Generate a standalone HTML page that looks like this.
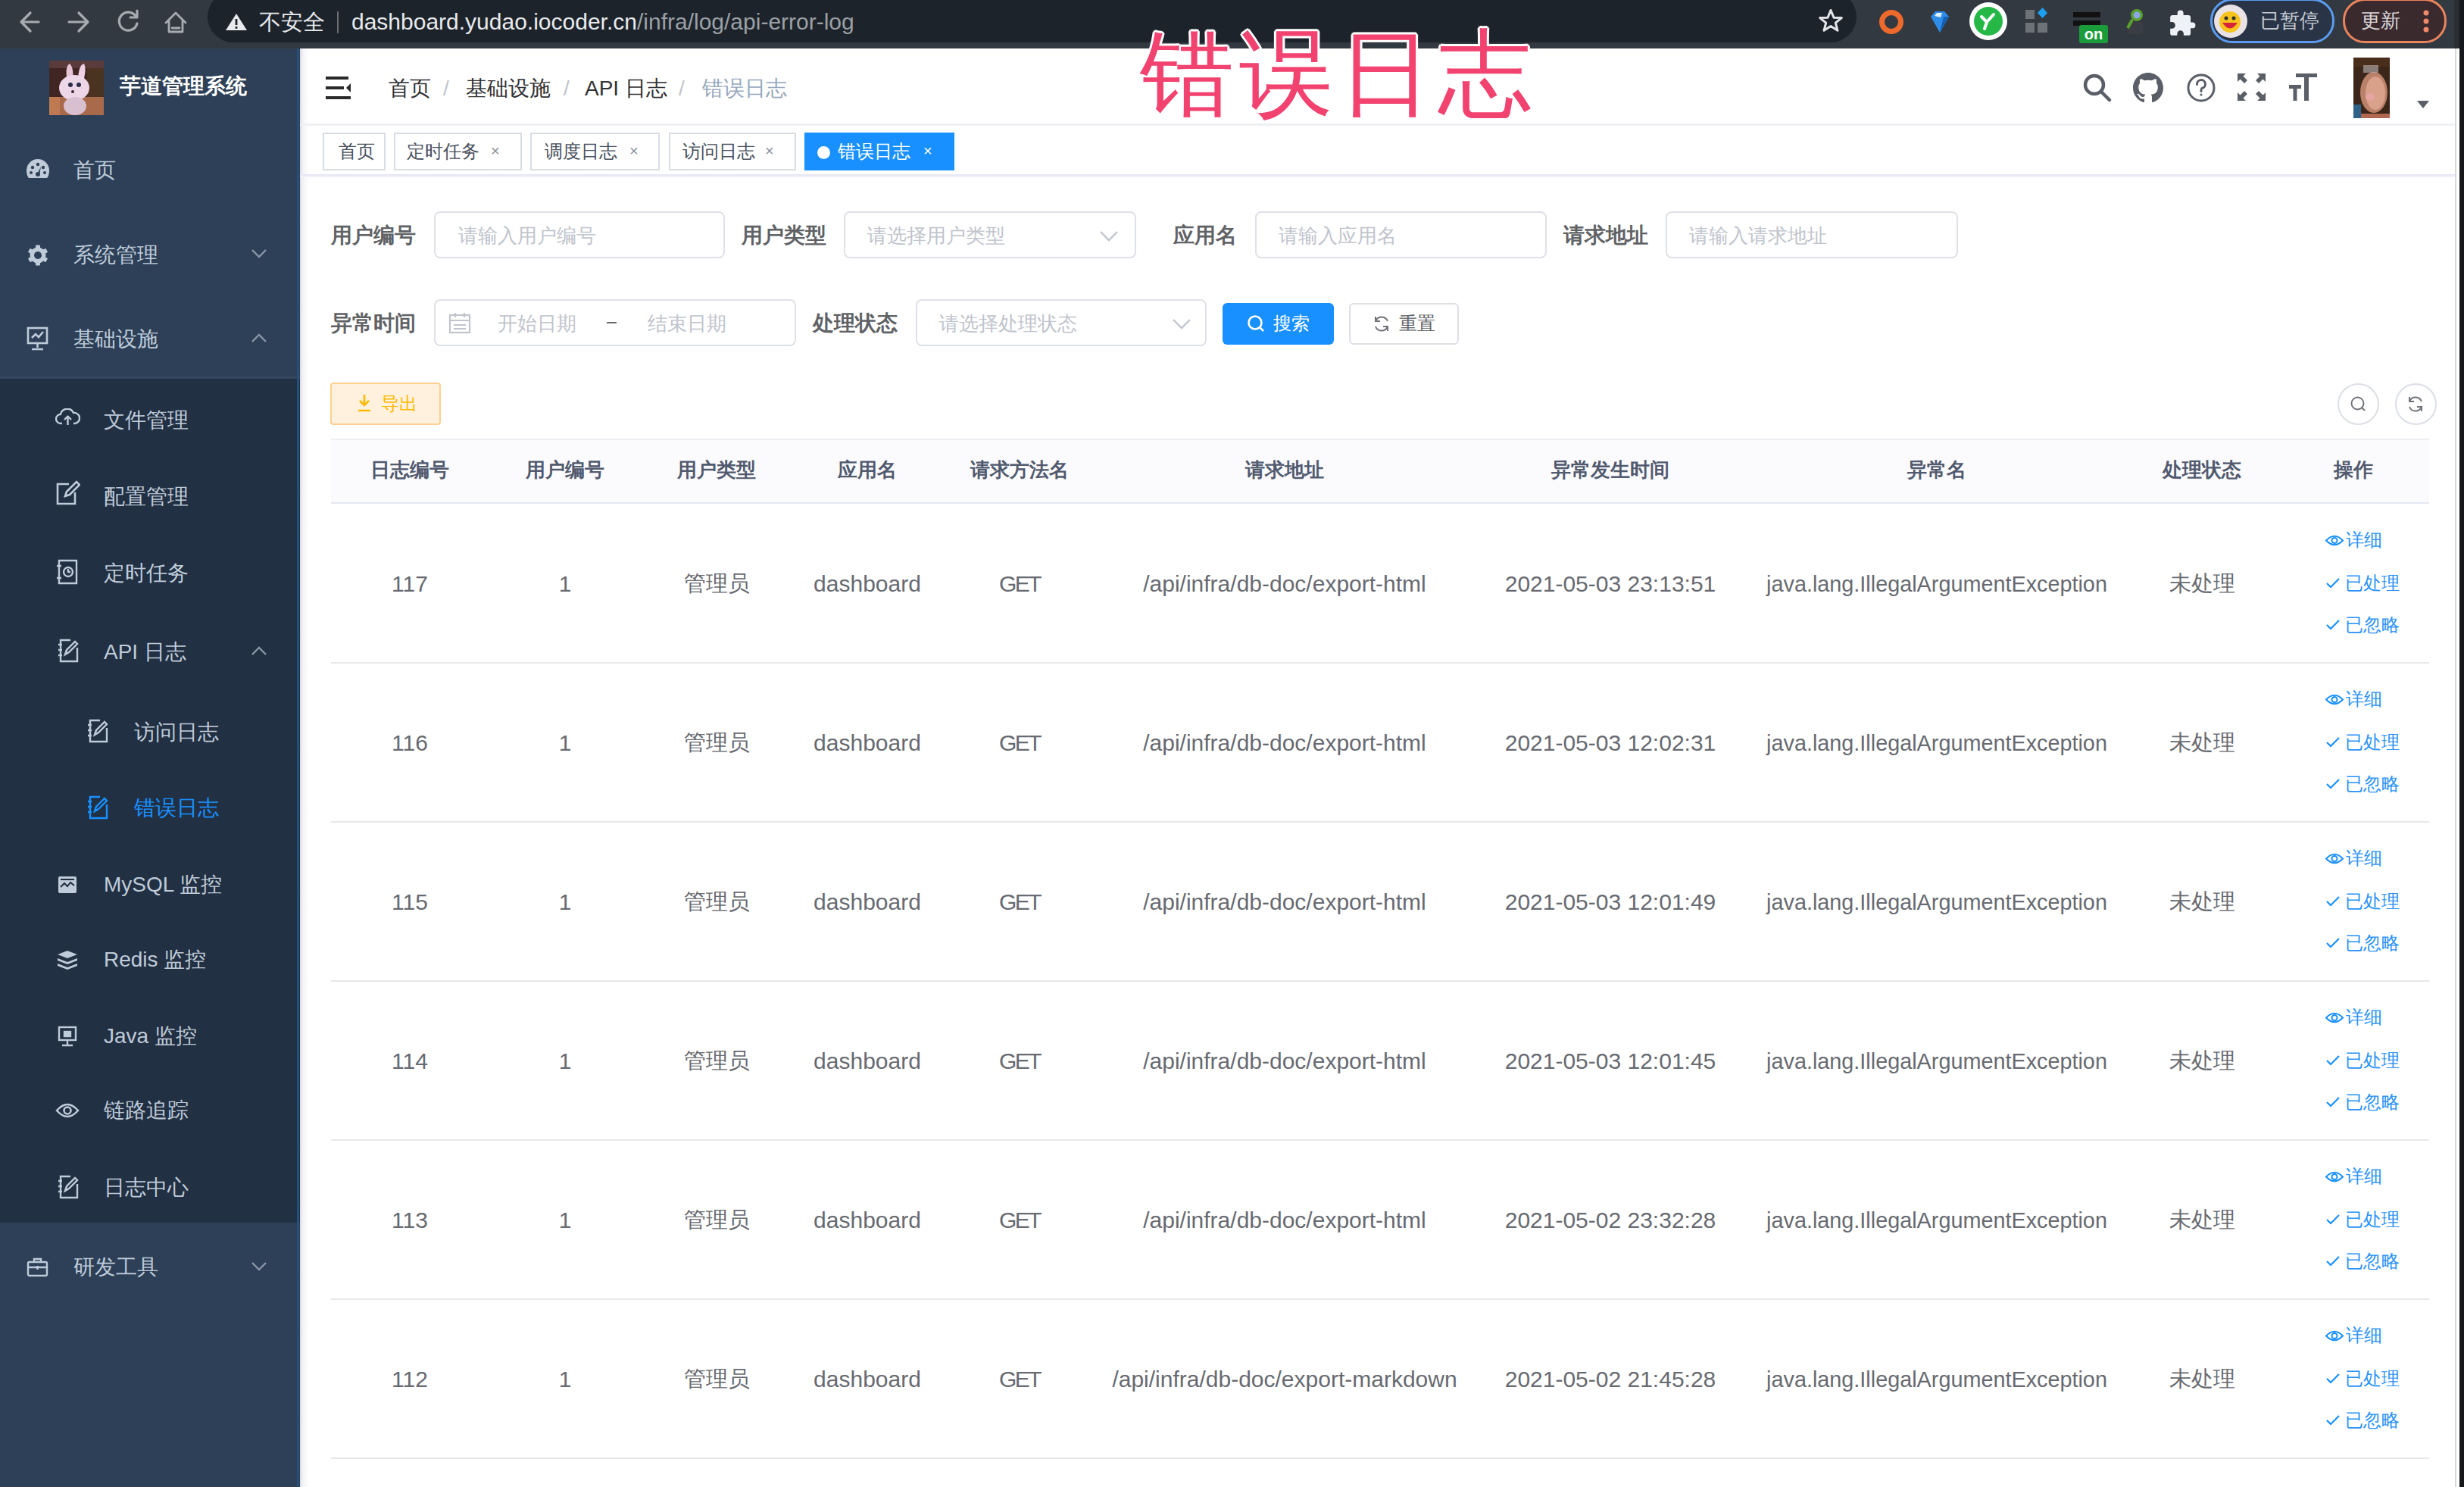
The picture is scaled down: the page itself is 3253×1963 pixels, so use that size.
<!DOCTYPE html>
<html><head><meta charset="utf-8">
<style>
*{box-sizing:border-box;margin:0;padding:0}
html,body{width:3253px;height:1963px;overflow:hidden;background:#fff;font-family:"Liberation Sans",sans-serif}
.a{position:absolute}
.t{position:absolute;white-space:nowrap;line-height:1}
svg{display:block}
/* chrome */
#chrome{left:0;top:0;width:3253px;height:64px;background:#333941}
#url{left:274px;top:-12px;width:2177px;height:68px;border-radius:34px;background:#1d232a}
/* sidebar */
#side{left:0;top:64px;width:396px;height:1899px;background:#2d4058}
#sub{left:0;top:500px;width:396px;height:1114px;background:#223043}
.mi{color:#bfcbd9;font-size:28px}
/* main */
.crumb{font-size:28px;color:#303133}
.sep{font-size:28px;color:#c0c4cc}
.tag{position:absolute;top:175px;height:50px;border:2px solid #d8dce5;background:#fff;color:#495060;font-size:24px}
.lbl{font-size:28px;font-weight:bold;color:#606266}
.inp{position:absolute;height:62px;border:2px solid #dfe1e8;border-radius:8px;background:#fff}
.ph{font-size:26px;color:#c0c4cc}
.th{font-size:26px;font-weight:bold;color:#515a6e}
.td{font-size:29px;color:#676a71}
.tl{font-size:30px;color:#676a71}
.lk{font-size:24px;color:#2a93fa}
.rowline{position:absolute;left:437px;width:2770px;height:2px;background:#e7e8ec}
</style></head><body>

<!-- ============ CHROME BAR ============ -->
<div id="chrome" class="a">
  <div id="url" class="a"></div>
  <svg class="a" style="left:0;top:0" width="300" height="64" viewBox="0 0 300 64" fill="none" stroke="#a6abb1" stroke-width="3.2" stroke-linecap="round" stroke-linejoin="round">
    <path d="M51 29H29M40 17L28 29L40 41"/>
    <path d="M91 29H115M104 17L116 29L104 41"/>
    <path d="M179 21A12 12 0 1 0 181 31"/><path d="M181 14V23H172" />
    <path d="M219 30L232 17L245 30M223 26V42H241V26M227 37H237" stroke-width="2.8"/>
  </svg>
  <svg class="a" style="left:296px;top:16px" width="32" height="26" viewBox="0 0 32 26"><path d="M16 2L30 24H2Z" fill="#e8eaed"/><rect x="14.6" y="9" width="2.8" height="8" fill="#1f2125"/><rect x="14.6" y="19" width="2.8" height="2.8" fill="#1f2125"/></svg>
  <div class="t" style="left:342px;top:15px;font-size:29px;color:#e8eaed">不安全</div>
  <div class="a" style="left:445px;top:15px;width:2px;height:29px;background:#6b6f75"></div>
  <div class="t" style="left:464px;top:14px;font-size:30px;color:#e8eaed">dashboard.yudao.iocoder.cn<span style="color:#9aa0a6">/infra/log/api-error-log</span></div>
  <svg class="a" style="left:2400px;top:11px" width="34" height="32" viewBox="0 0 34 32" fill="none" stroke="#e3e5e8" stroke-width="3" stroke-linejoin="round"><path d="M17 2.5L21 12.2L31.3 12.6L23.3 19.2L26 29.3L17 23.6L8 29.3L10.7 19.2L2.7 12.6L13 12.2Z"/></svg>
  <!-- extensions -->
  <svg class="a" style="left:2478px;top:10px" width="38" height="38" viewBox="0 0 38 38"><circle cx="19" cy="19" r="12.5" fill="none" stroke="#ee6a2c" stroke-width="7"/></svg>
  <svg class="a" style="left:2545px;top:12px" width="32" height="34" viewBox="0 0 32 34"><path d="M4 10L10 3H22L28 10L16 31Z" fill="#2e8be8"/><path d="M9 9L12 5H19L17 11Z" fill="#dff1ff"/><path d="M16 31L28 10H21Z" fill="#1360b5"/></svg>
  <svg class="a" style="left:2598px;top:1px" width="54" height="54" viewBox="0 0 54 54"><circle cx="27" cy="27" r="25" fill="#fff"/><circle cx="27" cy="27" r="19" fill="#25b847"/><path d="M18 21L25 28L34 18M25 28L22 37" fill="none" stroke="#fff" stroke-width="4" stroke-linecap="round"/></svg>
  <svg class="a" style="left:2672px;top:9px" width="34" height="36" viewBox="0 0 34 36"><rect x="2" y="4" width="12" height="12" fill="#6d7178"/><rect x="2" y="21" width="12" height="13" fill="#6d7178"/><rect x="18" y="21" width="13" height="13" fill="#6d7178"/><path d="M24.5 1L31 8L24.5 15L18 8Z" fill="#1ea0f0"/></svg>
  <svg class="a" style="left:2735px;top:14px" width="50" height="46" viewBox="0 0 50 46"><rect x="2" y="2" width="36" height="7" fill="#111"/><rect x="2" y="13" width="36" height="7" fill="#111"/><rect x="10" y="19" width="38" height="24" rx="3" fill="#1a9c3a"/><text x="29" y="38" font-family="Liberation Sans" font-weight="bold" font-size="20" fill="#fff" text-anchor="middle">on</text></svg>
  <svg class="a" style="left:2804px;top:9px" width="30" height="38" viewBox="0 0 30 38"><rect x="5" y="20" width="20" height="16" rx="2" fill="#3a3d42"/><circle cx="17" cy="11" r="8" fill="#5aa02c"/><circle cx="17" cy="11" r="4.5" fill="#8da6e8"/><path d="M11 17L5 28" stroke="#5aa02c" stroke-width="4"/></svg>
  <svg class="a" style="left:2862px;top:12px" width="38" height="38" viewBox="0 0 24 24"><path fill="#eef1f5" d="M20.5 11H19V7a2 2 0 0 0-2-2h-4V3.5a2.5 2.5 0 0 0-5 0V5H4a2 2 0 0 0-2 2v3.8h1.5a2.7 2.7 0 0 1 0 5.4H2V20a2 2 0 0 0 2 2h3.8v-1.5a2.7 2.7 0 0 1 5.4 0V22H17a2 2 0 0 0 2-2v-4h1.5a2.5 2.5 0 0 0 0-5z"/></svg>
  <!-- profile pill -->
  <div class="a" style="left:2918px;top:-2px;width:164px;height:59px;border-radius:29px;border:3px solid #5b9cf0;background:#293447"></div>
  <svg class="a" style="left:2922px;top:5px" width="46" height="46" viewBox="0 0 46 46"><circle cx="23" cy="23" r="22" fill="#e9e3e6"/><circle cx="22" cy="24" r="14" fill="#f7c31d"/><path d="M12 25Q22 40 32 25Z" fill="#d8243a"/><circle cx="17" cy="19" r="2.5" fill="#333"/><circle cx="27" cy="19" r="2.5" fill="#333"/></svg>
  <div class="t" style="left:2984px;top:14px;font-size:26px;color:#c5cad3">已暂停</div>
  <!-- update pill -->
  <div class="a" style="left:3093px;top:-2px;width:137px;height:59px;border-radius:29px;border:3px solid #e9845c;background:#3a2a2e"></div>
  <div class="t" style="left:3117px;top:14px;font-size:26px;color:#d9d4d6">更新</div>
  <svg class="a" style="left:3196px;top:12px" width="14" height="32" viewBox="0 0 14 32"><circle cx="7" cy="5" r="3.5" fill="#f08a6a"/><circle cx="7" cy="16" r="3.5" fill="#f08a6a"/><circle cx="7" cy="27" r="3.5" fill="#f08a6a"/></svg>
</div>
<!-- right window edge -->
<div class="a" style="left:3241px;top:64px;width:2px;height:1899px;background:#d6d8dc"></div>
<div class="a" style="left:3247px;top:0;width:6px;height:1963px;background:#16181b"></div>
<div class="a" style="left:3240px;top:0;width:7px;height:64px;background:#2a2d32"></div>

<!-- ============ SIDEBAR ============ -->
<div id="side" class="a"></div>
<div id="sub" class="a" style="top:500px"></div>
<div class="a" style="left:0;top:497px;width:396px;height:3px;background:#34475e"></div>
<div class="a" style="left:392px;top:64px;width:3px;height:1899px;background:#25507e"></div><div class="a" style="left:396px;top:64px;width:12px;height:1899px;background:linear-gradient(90deg,#d9dae0,#f3f3f7 30%,rgba(255,255,255,0))"></div>
<!-- logo -->
<svg class="a" style="left:65px;top:80px" width="72" height="72" viewBox="0 0 72 72">
  <rect width="72" height="72" fill="#3f2622"/>
  <rect x="0" y="0" width="72" height="10" fill="#5a3a3a"/>
  <rect x="50" y="10" width="22" height="40" fill="#4a3320"/>
  <rect y="48" width="72" height="24" fill="#a86a4a"/>
  <rect x="0" y="48" width="14" height="24" fill="#c07a52"/>
  <path d="M24 28Q20 8 27 4Q33 10 31 28Z" fill="#e8c3d6"/>
  <path d="M38 28Q38 6 46 4Q50 12 44 30Z" fill="#efd0e2"/>
  <ellipse cx="33" cy="36" rx="20" ry="17" fill="#ecd6e8"/>
  <ellipse cx="34" cy="60" rx="15" ry="12" fill="#d9c0d0"/>
  <circle cx="28" cy="32" r="3" fill="#2a2f45"/><circle cx="39" cy="32" r="3" fill="#2a2f45"/>
  <circle cx="31" cy="41" r="2" fill="#3a2530"/>
</svg>
<div class="t" style="left:158px;top:100px;font-size:28px;font-weight:bold;color:#fff">芋道管理系统</div>

<!-- menu icons (top level) -->
<svg class="a" style="left:34px;top:208px" width="32" height="30" viewBox="0 0 32 30"><path d="M16 2A15 15 0 0 0 1 17C1 21 2 25 4 27H28C30 25 31 21 31 17A15 15 0 0 0 16 2Z" fill="#bfcbd9"/><circle cx="9" cy="13" r="2.2" fill="#304156"/><circle cx="16" cy="9" r="2.2" fill="#304156"/><circle cx="23" cy="13" r="2.2" fill="#304156"/><circle cx="7" cy="20" r="2" fill="#304156"/><circle cx="25" cy="20" r="2" fill="#304156"/><path d="M15 22L20 12L18 23Z" fill="#304156"/><circle cx="16" cy="22" r="3" fill="#304156"/></svg>
<div class="t mi" style="left:97px;top:211px">首页</div>

<svg class="a" style="left:35px;top:322px" width="30" height="30" viewBox="0 0 30 30"><rect x="12" y="1.5" width="6" height="7" rx="1" fill="#bfcbd9" transform="rotate(0 15 15)"/><rect x="12" y="1.5" width="6" height="7" rx="1" fill="#bfcbd9" transform="rotate(60 15 15)"/><rect x="12" y="1.5" width="6" height="7" rx="1" fill="#bfcbd9" transform="rotate(120 15 15)"/><rect x="12" y="1.5" width="6" height="7" rx="1" fill="#bfcbd9" transform="rotate(180 15 15)"/><rect x="12" y="1.5" width="6" height="7" rx="1" fill="#bfcbd9" transform="rotate(240 15 15)"/><rect x="12" y="1.5" width="6" height="7" rx="1" fill="#bfcbd9" transform="rotate(300 15 15)"/><circle cx="15" cy="15" r="10.5" fill="#bfcbd9"/><circle cx="15" cy="15" r="5" fill="#2d4058"/></svg>
<div class="t mi" style="left:97px;top:323px">系统管理</div>
<svg class="a" style="left:331px;top:328px" width="22" height="13" viewBox="0 0 22 13"><path d="M2 2L11 11L20 2" fill="none" stroke="#8a96a6" stroke-width="2.4"/></svg>

<svg class="a" style="left:35px;top:431px" width="29" height="33" viewBox="0 0 29 33" fill="none" stroke="#bfcbd9" stroke-width="2.6"><rect x="2" y="2" width="25" height="20"/><path d="M7 15L12 10L16 14L22 7"/><path d="M14.5 22V28M7 30H22"/></svg>
<div class="t mi" style="left:97px;top:434px">基础设施</div>
<svg class="a" style="left:331px;top:440px" width="22" height="13" viewBox="0 0 22 13"><path d="M2 11L11 2L20 11" fill="none" stroke="#8a96a6" stroke-width="2.4"/></svg>

<!-- submenu -->
<svg class="a" style="left:73px;top:539px" width="33" height="24" viewBox="0 0 33 24" fill="none" stroke="#bfcbd9" stroke-width="2.4" stroke-linejoin="round"><path d="M9 20H7A6 6 0 0 1 7 8A9 9 0 0 1 24 6A7 7 0 0 1 26 20H24"/><path d="M16.5 22V11M12 15L16.5 10.5L21 15"/></svg>
<div class="t mi" style="left:137px;top:541px">文件管理</div>

<svg class="a" style="left:73px;top:633px" width="33" height="35" viewBox="0 0 33 35" fill="none" stroke="#bfcbd9" stroke-width="2.6"><path d="M18 6H3V32H26V17"/><path d="M13 22L15 16L28 3L32 7L19 20Z"/></svg>
<div class="t mi" style="left:137px;top:642px">配置管理</div>

<svg class="a" style="left:75px;top:738px" width="29" height="34" viewBox="0 0 29 34" fill="none" stroke="#bfcbd9" stroke-width="2.4"><path d="M3 2H26V32H3Z"/><path d="M0 9H6M0 25H6"/><circle cx="15" cy="17" r="6"/><path d="M15 13V17H18"/></svg>
<div class="t mi" style="left:137px;top:743px">定时任务</div>

<svg class="a" style="left:77px;top:843px" width="27" height="32" viewBox="0 0 27 32" fill="none" stroke="#bfcbd9" stroke-width="2.4"><path d="M16 2H3V30H25V12"/><path d="M0 8H5M0 15H5M0 22H5"/><path d="M9 21L11 15L22 4L25 7L14 18Z"/></svg>
<div class="t mi" style="left:137px;top:847px">API 日志</div>
<svg class="a" style="left:331px;top:853px" width="22" height="13" viewBox="0 0 22 13"><path d="M2 11L11 2L20 11" fill="none" stroke="#8a96a6" stroke-width="2.4"/></svg>

<svg class="a" style="left:116px;top:949px" width="27" height="32" viewBox="0 0 27 32" fill="none" stroke="#bfcbd9" stroke-width="2.4"><path d="M16 2H3V30H25V12"/><path d="M0 8H5M0 15H5M0 22H5"/><path d="M9 21L11 15L22 4L25 7L14 18Z"/></svg>
<div class="t mi" style="left:177px;top:953px">访问日志</div>

<svg class="a" style="left:116px;top:1050px" width="27" height="32" viewBox="0 0 27 32" fill="none" stroke="#1890ff" stroke-width="2.4"><path d="M16 2H3V30H25V12"/><path d="M0 8H5M0 15H5M0 22H5"/><path d="M9 21L11 15L22 4L25 7L14 18Z"/></svg>
<div class="t mi" style="left:177px;top:1053px;color:#1890ff">错误日志</div>

<svg class="a" style="left:76px;top:1156px" width="26" height="24" viewBox="0 0 26 24"><rect x="1" y="1" width="24" height="22" rx="2" fill="#bfcbd9"/><path d="M4 15L9 10L13 14L17 9L22 13" fill="none" stroke="#1f2d3d" stroke-width="2"/><rect x="4" y="4" width="18" height="2" fill="#1f2d3d"/></svg>
<div class="t mi" style="left:137px;top:1154px">MySQL 监控</div>

<svg class="a" style="left:74px;top:1253px" width="30" height="28" viewBox="0 0 30 28"><path d="M15 2L28 7L15 12L2 7Z" fill="#bfcbd9"/><path d="M2 12L15 17L28 12V15L15 20L2 15Z" fill="#bfcbd9"/><path d="M2 19L15 24L28 19V22L15 27L2 22Z" fill="#bfcbd9"/></svg>
<div class="t mi" style="left:137px;top:1253px">Redis 监控</div>

<svg class="a" style="left:76px;top:1354px" width="26" height="28" viewBox="0 0 26 28" fill="none" stroke="#bfcbd9" stroke-width="2.4"><rect x="2" y="2" width="22" height="17"/><path d="M13 19V25M6 26H20"/><rect x="9" y="8" width="8" height="6" fill="#bfcbd9"/></svg>
<div class="t mi" style="left:137px;top:1354px">Java 监控</div>

<svg class="a" style="left:73px;top:1454px" width="32" height="24" viewBox="0 0 32 24" fill="none" stroke="#bfcbd9" stroke-width="2.6"><path d="M2 12Q16 -4 30 12Q16 28 2 12Z"/><circle cx="16" cy="12" r="4.5"/></svg>
<div class="t mi" style="left:137px;top:1452px">链路追踪</div>

<svg class="a" style="left:77px;top:1551px" width="27" height="32" viewBox="0 0 27 32" fill="none" stroke="#bfcbd9" stroke-width="2.4"><path d="M16 2H3V30H25V12"/><path d="M0 8H5M0 15H5M0 22H5"/><path d="M9 21L11 15L22 4L25 7L14 18Z"/></svg>
<div class="t mi" style="left:137px;top:1554px">日志中心</div>

<svg class="a" style="left:35px;top:1659px" width="29" height="27" viewBox="0 0 29 27" fill="none" stroke="#bfcbd9" stroke-width="2.4"><rect x="2" y="7" width="25" height="18" rx="2"/><path d="M10 7V3H19V7M2 14H27M14.5 12V17"/></svg>
<div class="t mi" style="left:97px;top:1659px">研发工具</div>
<svg class="a" style="left:331px;top:1665px" width="22" height="13" viewBox="0 0 22 13"><path d="M2 2L11 11L20 2" fill="none" stroke="#8a96a6" stroke-width="2.4"/></svg>

<!-- ============ MAIN ============ -->
<!-- navbar -->
<div class="a" style="left:396px;top:163px;width:2845px;height:3px;background:#eef0f3"></div>
<svg class="a" style="left:428px;top:99px" width="38" height="34" viewBox="0 0 38 34"><rect x="2" y="2" width="30" height="4" fill="#2a2a2a"/><rect x="2" y="15" width="24" height="4" fill="#2a2a2a"/><rect x="2" y="28" width="33" height="4" fill="#2a2a2a"/><path d="M35 11L29 17L35 23Z" fill="#2a2a2a"/></svg>
<div class="t crumb" style="left:513px;top:103px">首页</div>
<div class="t sep" style="left:585px;top:103px">/</div>
<div class="t crumb" style="left:615px;top:103px">基础设施</div>
<div class="t sep" style="left:744px;top:103px">/</div>
<div class="t crumb" style="left:772px;top:103px">API 日志</div>
<div class="t sep" style="left:896px;top:103px">/</div>
<div class="t crumb" style="left:927px;top:103px;color:#97a8be">错误日志</div>

<!-- right icons -->
<svg class="a" style="left:2749px;top:96px" width="40" height="40" viewBox="0 0 40 40" fill="none" stroke="#5a5e66" stroke-width="4.5" stroke-linecap="round"><circle cx="16" cy="16" r="12"/><path d="M25 25L36 36"/></svg>
<svg class="a" style="left:2816px;top:96px" width="40" height="40" viewBox="0 0 16 16"><path fill="#5a5e66" d="M8 0C3.58 0 0 3.58 0 8c0 3.54 2.29 6.53 5.47 7.59.4.07.55-.17.55-.38 0-.19-.01-.82-.01-1.49-2.01.37-2.53-.49-2.69-.94-.09-.23-.48-.94-.82-1.13-.28-.15-.68-.52-.01-.53.63-.01 1.08.58 1.23.82.72 1.21 1.87.87 2.33.66.07-.52.28-.87.51-1.07-1.78-.2-3.64-.89-3.64-3.95 0-.87.31-1.59.82-2.15-.08-.2-.36-1.02.08-2.12 0 0 .67-.21 2.2.82.64-.18 1.32-.27 2-.27.68 0 1.36.09 2 .27 1.53-1.04 2.2-.82 2.2-.82.44 1.1.16 1.92.08 2.12.51.56.82 1.27.82 2.15 0 3.07-1.87 3.75-3.65 3.95.29.25.54.73.54 1.48 0 1.07-.01 1.93-.01 2.2 0 .21.15.46.55.38A8.013 8.013 0 0016 8c0-4.42-3.58-8-8-8z"/></svg>
<svg class="a" style="left:2886px;top:96px" width="40" height="40" viewBox="0 0 40 40" fill="none" stroke="#5a5e66" stroke-width="3"><circle cx="20" cy="20" r="17"/><path d="M14.5 15.5A5.5 5.5 0 1 1 21 20.5C20 21 20 22 20 24.5" stroke-linecap="round"/><circle cx="20" cy="29" r="1.6" fill="#5a5e66" stroke="none"/></svg>
<svg class="a" style="left:2952px;top:95px" width="41" height="40" viewBox="0 0 41 40" fill="#5a5e66"><path d="M2 2H13L9.5 5.5L15 11L11 15L5.5 9.5L2 13Z"/><path d="M39 2H28L31.5 5.5L26 11L30 15L35.5 9.5L39 13Z"/><path d="M2 38H13L9.5 34.5L15 29L11 25L5.5 30.5L2 27Z"/><path d="M39 38H28L31.5 34.5L26 29L30 25L35.5 30.5L39 27Z"/></svg>
<svg class="a" style="left:3021px;top:95px" width="40" height="40" viewBox="0 0 40 40" fill="#5a5e66"><rect x="10" y="2" width="28" height="5"/><rect x="21" y="2" width="6" height="36"/><rect x="1" y="17" width="16" height="5"/><rect x="6.5" y="17" width="5" height="21"/></svg>
<svg class="a" style="left:3107px;top:76px" width="48" height="80" viewBox="0 0 48 80">
  <rect width="48" height="80" fill="#3b2619"/>
  <rect x="0" y="0" width="48" height="12" fill="#4a2e1c"/>
  <ellipse cx="27" cy="46" rx="18" ry="27" fill="#b9806a"/>
  <ellipse cx="29" cy="47" rx="13" ry="22" fill="#d9a08a"/>
  <ellipse cx="22" cy="52" rx="6" ry="5" fill="#e7a4a0"/>
  <rect x="13" y="10" width="20" height="10" fill="#c9c4c4" opacity=".55"/>
  <rect x="0" y="62" width="10" height="18" fill="#2f6288"/>
  <rect x="10" y="74" width="38" height="6" fill="#b06850"/>
</svg>
<svg class="a" style="left:3190px;top:132px" width="18" height="12" viewBox="0 0 18 12"><path d="M1 1H17L9 11Z" fill="#5a5e66"/></svg>

<!-- tags view -->
<div class="a" style="left:396px;top:230px;width:2845px;height:4px;background:linear-gradient(#e3e3f3,#f5f5fb)"></div>
<div class="tag" style="left:426px;width:83px"></div><div class="t" style="left:447px;top:188px;font-size:24px;color:#495060">首页</div>
<div class="tag" style="left:520px;width:169px"></div><div class="t" style="left:537px;top:188px;font-size:24px;color:#495060">定时任务</div><div class="t" style="left:648px;top:189px;font-size:20px;color:#8a909c">×</div>
<div class="tag" style="left:700px;width:171px"></div><div class="t" style="left:719px;top:188px;font-size:24px;color:#495060">调度日志</div><div class="t" style="left:831px;top:189px;font-size:20px;color:#8a909c">×</div>
<div class="tag" style="left:883px;width:168px"></div><div class="t" style="left:901px;top:188px;font-size:24px;color:#495060">访问日志</div><div class="t" style="left:1010px;top:189px;font-size:20px;color:#8a909c">×</div>
<div class="a" style="left:1062px;top:175px;width:198px;height:50px;background:#1890ff"></div>
<div class="a" style="left:1079px;top:193px;width:17px;height:17px;border-radius:50%;background:#fff"></div>
<div class="t" style="left:1106px;top:188px;font-size:24px;color:#fff">错误日志</div><div class="t" style="left:1219px;top:189px;font-size:20px;color:#fff">×</div>

<!-- ===== search form ===== -->
<div class="t lbl" style="left:437px;top:297px">用户编号</div>
<div class="inp" style="left:573px;top:279px;width:384px"></div>
<div class="t ph" style="left:605px;top:298px">请输入用户编号</div>

<div class="t lbl" style="left:979px;top:297px">用户类型</div>
<div class="inp" style="left:1114px;top:279px;width:386px"></div>
<div class="t ph" style="left:1145px;top:298px">请选择用户类型</div>
<svg class="a" style="left:1451px;top:304px" width="26" height="16" viewBox="0 0 26 16"><path d="M2 2L13 13L24 2" fill="none" stroke="#c0c4cc" stroke-width="2.4"/></svg>

<div class="t lbl" style="left:1549px;top:297px">应用名</div>
<div class="inp" style="left:1657px;top:279px;width:385px"></div>
<div class="t ph" style="left:1688px;top:298px">请输入应用名</div>

<div class="t lbl" style="left:2064px;top:297px">请求地址</div>
<div class="inp" style="left:2199px;top:279px;width:386px"></div>
<div class="t ph" style="left:2230px;top:298px">请输入请求地址</div>

<div class="t lbl" style="left:437px;top:413px">异常时间</div>
<div class="inp" style="left:573px;top:395px;width:478px"></div>
<svg class="a" style="left:592px;top:412px" width="30" height="30" viewBox="0 0 30 30" fill="none" stroke="#c0c4cc" stroke-width="2.2"><rect x="2" y="4" width="26" height="23"/><path d="M2 11H28M9 1V7M21 1V7M7 17H23M7 22H23"/></svg>
<div class="t ph" style="left:657px;top:414px">开始日期</div>
<div class="a" style="left:801px;top:425px;width:13px;height:2px;background:#6a6c72"></div>
<div class="t ph" style="left:855px;top:414px">结束日期</div>

<div class="t lbl" style="left:1073px;top:413px">处理状态</div>
<div class="inp" style="left:1209px;top:395px;width:384px"></div>
<div class="t ph" style="left:1240px;top:414px">请选择处理状态</div>
<svg class="a" style="left:1547px;top:420px" width="26" height="16" viewBox="0 0 26 16"><path d="M2 2L13 13L24 2" fill="none" stroke="#c0c4cc" stroke-width="2.4"/></svg>

<div class="a" style="left:1614px;top:400px;width:147px;height:55px;border-radius:6px;background:#1890ff"></div>
<svg class="a" style="left:1646px;top:415px" width="25" height="25" viewBox="0 0 25 25" fill="none" stroke="#fff" stroke-width="2.6"><circle cx="11" cy="11" r="8.5"/><path d="M17 17L22 22"/></svg>
<div class="t" style="left:1681px;top:415px;font-size:24px;color:#fff">搜索</div>

<div class="a" style="left:1781px;top:400px;width:145px;height:55px;border-radius:6px;border:2px solid #dcdfe6;background:#fff"></div>
<svg class="a" style="left:1813px;top:416px" width="23" height="23" viewBox="0 0 23 23" fill="none" stroke="#6f7278" stroke-width="2"><path d="M19 8A8.5 8.5 0 0 0 3.5 7M3 15A8.5 8.5 0 0 0 18.5 16"/><path d="M3 2V8H9M19 21V15H13" /></svg>
<div class="t" style="left:1847px;top:415px;font-size:24px;color:#606266">重置</div>

<!-- toolbar -->
<div class="a" style="left:436px;top:505px;width:146px;height:56px;border-radius:4px;border:2px solid #ffd08f;background:#fff1de"></div>
<svg class="a" style="left:471px;top:519px" width="20" height="26" viewBox="0 0 20 26" fill="none" stroke="#ffba00" stroke-width="2.6"><path d="M10 2V16M4 10L10 16L16 10M2 23H18"/></svg>
<div class="t" style="left:503px;top:521px;font-size:24px;color:#ffba00">导出</div>

<div class="a" style="left:3086px;top:506px;width:55px;height:55px;border-radius:50%;border:2px solid #dcdfe6;background:#fff"></div>
<svg class="a" style="left:3101px;top:521px" width="25" height="25" viewBox="0 0 25 25" fill="none" stroke="#6f7278" stroke-width="1.9"><circle cx="11.5" cy="11.5" r="8"/><path d="M17 17L21 21"/></svg>
<div class="a" style="left:3162px;top:506px;width:55px;height:55px;border-radius:50%;border:2px solid #dcdfe6;background:#fff"></div>
<svg class="a" style="left:3178px;top:522px" width="23" height="23" viewBox="0 0 23 23" fill="none" stroke="#6f7278" stroke-width="1.9"><path d="M19 8A8.5 8.5 0 0 0 3.5 7M3 15A8.5 8.5 0 0 0 18.5 16"/><path d="M3 2V8H9M19 21V15H13" /></svg>

<!-- ===== table ===== -->
<div class="a" style="left:437px;top:579px;width:2770px;height:86px;background:#fbfbfe;border-top:2px solid #eef0f4"></div>
<div class="a" style="left:437px;top:663px;width:2770px;height:2px;background:#e3e7ee"></div>
<div class="t th" style="left:437px;width:208px;text-align:center;top:607px">日志编号</div>
<div class="t th" style="left:645px;width:202px;text-align:center;top:607px">用户编号</div>
<div class="t th" style="left:847px;width:198px;text-align:center;top:607px">用户类型</div>
<div class="t th" style="left:1045px;width:200px;text-align:center;top:607px">应用名</div>
<div class="t th" style="left:1245px;width:202px;text-align:center;top:607px">请求方法名</div>
<div class="t th" style="left:1447px;width:498px;text-align:center;top:607px">请求地址</div>
<div class="t th" style="left:1945px;width:362px;text-align:center;top:607px">异常发生时间</div>
<div class="t th" style="left:2307px;width:500px;text-align:center;top:607px">异常名</div>
<div class="t th" style="left:2807px;width:200px;text-align:center;top:607px">处理状态</div>
<div class="t th" style="left:3007px;width:200px;text-align:center;top:607px">操作</div>
<div class="rowline" style="top:874px"></div>
<div class="t tl" style="left:437px;width:208px;text-align:center;top:756px">117</div>
<div class="t tl" style="left:645px;width:202px;text-align:center;top:756px">1</div>
<div class="t td" style="left:847px;width:198px;text-align:center;top:756px">管理员</div>
<div class="t tl" style="left:1045px;width:200px;text-align:center;top:756px">dashboard</div>
<div class="t tl" style="left:1245px;width:202px;text-align:center;top:756px"><span style="letter-spacing:-2.5px">GET</span></div>
<div class="t tl" style="left:1447px;width:498px;text-align:center;top:756px">/api/infra/db-doc/export-html</div>
<div class="t tl" style="left:1945px;width:362px;text-align:center;top:756px">2021-05-03 23:13:51</div>
<div class="t tl" style="left:2307px;width:500px;text-align:center;top:756px"><span style="font-size:28.8px">java.lang.IllegalArgumentException</span></div>
<div class="t td" style="left:2807px;width:200px;text-align:center;top:756px">未处理</div>
<svg class="a" style="left:3069px;top:705px" width="26" height="17" viewBox="0 0 26 17" fill="none" stroke="#1890ff" stroke-width="2"><path d="M2 8.5Q13 -3 24 8.5Q13 20 2 8.5Z"/><circle cx="13" cy="8.5" r="3.5"/></svg>
<div class="t lk" style="left:3097px;top:701px">详细</div>
<svg class="a" style="left:3070px;top:762px" width="20" height="16" viewBox="0 0 20 16" fill="none" stroke="#1890ff" stroke-width="2.2"><path d="M2 8L7 13L18 2"/></svg>
<div class="t lk" style="left:3096px;top:758px">已处理</div>
<svg class="a" style="left:3070px;top:817px" width="20" height="16" viewBox="0 0 20 16" fill="none" stroke="#1890ff" stroke-width="2.2"><path d="M2 8L7 13L18 2"/></svg>
<div class="t lk" style="left:3096px;top:813px">已忽略</div>
<div class="rowline" style="top:1084px"></div>
<div class="t tl" style="left:437px;width:208px;text-align:center;top:966px">116</div>
<div class="t tl" style="left:645px;width:202px;text-align:center;top:966px">1</div>
<div class="t td" style="left:847px;width:198px;text-align:center;top:966px">管理员</div>
<div class="t tl" style="left:1045px;width:200px;text-align:center;top:966px">dashboard</div>
<div class="t tl" style="left:1245px;width:202px;text-align:center;top:966px"><span style="letter-spacing:-2.5px">GET</span></div>
<div class="t tl" style="left:1447px;width:498px;text-align:center;top:966px">/api/infra/db-doc/export-html</div>
<div class="t tl" style="left:1945px;width:362px;text-align:center;top:966px">2021-05-03 12:02:31</div>
<div class="t tl" style="left:2307px;width:500px;text-align:center;top:966px"><span style="font-size:28.8px">java.lang.IllegalArgumentException</span></div>
<div class="t td" style="left:2807px;width:200px;text-align:center;top:966px">未处理</div>
<svg class="a" style="left:3069px;top:915px" width="26" height="17" viewBox="0 0 26 17" fill="none" stroke="#1890ff" stroke-width="2"><path d="M2 8.5Q13 -3 24 8.5Q13 20 2 8.5Z"/><circle cx="13" cy="8.5" r="3.5"/></svg>
<div class="t lk" style="left:3097px;top:911px">详细</div>
<svg class="a" style="left:3070px;top:972px" width="20" height="16" viewBox="0 0 20 16" fill="none" stroke="#1890ff" stroke-width="2.2"><path d="M2 8L7 13L18 2"/></svg>
<div class="t lk" style="left:3096px;top:968px">已处理</div>
<svg class="a" style="left:3070px;top:1027px" width="20" height="16" viewBox="0 0 20 16" fill="none" stroke="#1890ff" stroke-width="2.2"><path d="M2 8L7 13L18 2"/></svg>
<div class="t lk" style="left:3096px;top:1023px">已忽略</div>
<div class="rowline" style="top:1294px"></div>
<div class="t tl" style="left:437px;width:208px;text-align:center;top:1176px">115</div>
<div class="t tl" style="left:645px;width:202px;text-align:center;top:1176px">1</div>
<div class="t td" style="left:847px;width:198px;text-align:center;top:1176px">管理员</div>
<div class="t tl" style="left:1045px;width:200px;text-align:center;top:1176px">dashboard</div>
<div class="t tl" style="left:1245px;width:202px;text-align:center;top:1176px"><span style="letter-spacing:-2.5px">GET</span></div>
<div class="t tl" style="left:1447px;width:498px;text-align:center;top:1176px">/api/infra/db-doc/export-html</div>
<div class="t tl" style="left:1945px;width:362px;text-align:center;top:1176px">2021-05-03 12:01:49</div>
<div class="t tl" style="left:2307px;width:500px;text-align:center;top:1176px"><span style="font-size:28.8px">java.lang.IllegalArgumentException</span></div>
<div class="t td" style="left:2807px;width:200px;text-align:center;top:1176px">未处理</div>
<svg class="a" style="left:3069px;top:1125px" width="26" height="17" viewBox="0 0 26 17" fill="none" stroke="#1890ff" stroke-width="2"><path d="M2 8.5Q13 -3 24 8.5Q13 20 2 8.5Z"/><circle cx="13" cy="8.5" r="3.5"/></svg>
<div class="t lk" style="left:3097px;top:1121px">详细</div>
<svg class="a" style="left:3070px;top:1182px" width="20" height="16" viewBox="0 0 20 16" fill="none" stroke="#1890ff" stroke-width="2.2"><path d="M2 8L7 13L18 2"/></svg>
<div class="t lk" style="left:3096px;top:1178px">已处理</div>
<svg class="a" style="left:3070px;top:1237px" width="20" height="16" viewBox="0 0 20 16" fill="none" stroke="#1890ff" stroke-width="2.2"><path d="M2 8L7 13L18 2"/></svg>
<div class="t lk" style="left:3096px;top:1233px">已忽略</div>
<div class="rowline" style="top:1504px"></div>
<div class="t tl" style="left:437px;width:208px;text-align:center;top:1386px">114</div>
<div class="t tl" style="left:645px;width:202px;text-align:center;top:1386px">1</div>
<div class="t td" style="left:847px;width:198px;text-align:center;top:1386px">管理员</div>
<div class="t tl" style="left:1045px;width:200px;text-align:center;top:1386px">dashboard</div>
<div class="t tl" style="left:1245px;width:202px;text-align:center;top:1386px"><span style="letter-spacing:-2.5px">GET</span></div>
<div class="t tl" style="left:1447px;width:498px;text-align:center;top:1386px">/api/infra/db-doc/export-html</div>
<div class="t tl" style="left:1945px;width:362px;text-align:center;top:1386px">2021-05-03 12:01:45</div>
<div class="t tl" style="left:2307px;width:500px;text-align:center;top:1386px"><span style="font-size:28.8px">java.lang.IllegalArgumentException</span></div>
<div class="t td" style="left:2807px;width:200px;text-align:center;top:1386px">未处理</div>
<svg class="a" style="left:3069px;top:1335px" width="26" height="17" viewBox="0 0 26 17" fill="none" stroke="#1890ff" stroke-width="2"><path d="M2 8.5Q13 -3 24 8.5Q13 20 2 8.5Z"/><circle cx="13" cy="8.5" r="3.5"/></svg>
<div class="t lk" style="left:3097px;top:1331px">详细</div>
<svg class="a" style="left:3070px;top:1392px" width="20" height="16" viewBox="0 0 20 16" fill="none" stroke="#1890ff" stroke-width="2.2"><path d="M2 8L7 13L18 2"/></svg>
<div class="t lk" style="left:3096px;top:1388px">已处理</div>
<svg class="a" style="left:3070px;top:1447px" width="20" height="16" viewBox="0 0 20 16" fill="none" stroke="#1890ff" stroke-width="2.2"><path d="M2 8L7 13L18 2"/></svg>
<div class="t lk" style="left:3096px;top:1443px">已忽略</div>
<div class="rowline" style="top:1714px"></div>
<div class="t tl" style="left:437px;width:208px;text-align:center;top:1596px">113</div>
<div class="t tl" style="left:645px;width:202px;text-align:center;top:1596px">1</div>
<div class="t td" style="left:847px;width:198px;text-align:center;top:1596px">管理员</div>
<div class="t tl" style="left:1045px;width:200px;text-align:center;top:1596px">dashboard</div>
<div class="t tl" style="left:1245px;width:202px;text-align:center;top:1596px"><span style="letter-spacing:-2.5px">GET</span></div>
<div class="t tl" style="left:1447px;width:498px;text-align:center;top:1596px">/api/infra/db-doc/export-html</div>
<div class="t tl" style="left:1945px;width:362px;text-align:center;top:1596px">2021-05-02 23:32:28</div>
<div class="t tl" style="left:2307px;width:500px;text-align:center;top:1596px"><span style="font-size:28.8px">java.lang.IllegalArgumentException</span></div>
<div class="t td" style="left:2807px;width:200px;text-align:center;top:1596px">未处理</div>
<svg class="a" style="left:3069px;top:1545px" width="26" height="17" viewBox="0 0 26 17" fill="none" stroke="#1890ff" stroke-width="2"><path d="M2 8.5Q13 -3 24 8.5Q13 20 2 8.5Z"/><circle cx="13" cy="8.5" r="3.5"/></svg>
<div class="t lk" style="left:3097px;top:1541px">详细</div>
<svg class="a" style="left:3070px;top:1602px" width="20" height="16" viewBox="0 0 20 16" fill="none" stroke="#1890ff" stroke-width="2.2"><path d="M2 8L7 13L18 2"/></svg>
<div class="t lk" style="left:3096px;top:1598px">已处理</div>
<svg class="a" style="left:3070px;top:1657px" width="20" height="16" viewBox="0 0 20 16" fill="none" stroke="#1890ff" stroke-width="2.2"><path d="M2 8L7 13L18 2"/></svg>
<div class="t lk" style="left:3096px;top:1653px">已忽略</div>
<div class="rowline" style="top:1924px"></div>
<div class="t tl" style="left:437px;width:208px;text-align:center;top:1806px">112</div>
<div class="t tl" style="left:645px;width:202px;text-align:center;top:1806px">1</div>
<div class="t td" style="left:847px;width:198px;text-align:center;top:1806px">管理员</div>
<div class="t tl" style="left:1045px;width:200px;text-align:center;top:1806px">dashboard</div>
<div class="t tl" style="left:1245px;width:202px;text-align:center;top:1806px"><span style="letter-spacing:-2.5px">GET</span></div>
<div class="t tl" style="left:1447px;width:498px;text-align:center;top:1806px">/api/infra/db-doc/export-markdown</div>
<div class="t tl" style="left:1945px;width:362px;text-align:center;top:1806px">2021-05-02 21:45:28</div>
<div class="t tl" style="left:2307px;width:500px;text-align:center;top:1806px"><span style="font-size:28.8px">java.lang.IllegalArgumentException</span></div>
<div class="t td" style="left:2807px;width:200px;text-align:center;top:1806px">未处理</div>
<svg class="a" style="left:3069px;top:1755px" width="26" height="17" viewBox="0 0 26 17" fill="none" stroke="#1890ff" stroke-width="2"><path d="M2 8.5Q13 -3 24 8.5Q13 20 2 8.5Z"/><circle cx="13" cy="8.5" r="3.5"/></svg>
<div class="t lk" style="left:3097px;top:1751px">详细</div>
<svg class="a" style="left:3070px;top:1812px" width="20" height="16" viewBox="0 0 20 16" fill="none" stroke="#1890ff" stroke-width="2.2"><path d="M2 8L7 13L18 2"/></svg>
<div class="t lk" style="left:3096px;top:1808px">已处理</div>
<svg class="a" style="left:3070px;top:1867px" width="20" height="16" viewBox="0 0 20 16" fill="none" stroke="#1890ff" stroke-width="2.2"><path d="M2 8L7 13L18 2"/></svg>
<div class="t lk" style="left:3096px;top:1863px">已忽略</div>

<!-- big overlay title -->
<div class="t" style="left:1505px;top:35px;font-size:124px;letter-spacing:7px;color:#f2426f;text-shadow:3px 0 0 #fff,-3px 0 0 #fff,0 3px 0 #fff,0 -3px 0 #fff,2px 2px 0 #fff,-2px -2px 0 #fff,2px -2px 0 #fff,-2px 2px 0 #fff">错误日志</div>

</body></html>
